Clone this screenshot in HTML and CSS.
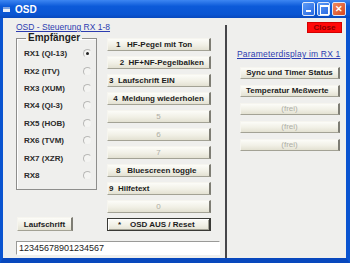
FILE: index.html
```html
<!DOCTYPE html>
<html lang="de">

<head>
    <meta charset="UTF-8">
    <title>OSD</title>
    <link rel="stylesheet" href="styles.css">
</head>

<body>
    <div class="window">
        <div class="titlebar">
            <span class="app-icon"></span>
            <span class="caption">OSD</span>
            <div class="controls">
                <span class="ctl ctl-min"></span>
                <span class="ctl ctl-max"></span>
                <span class="ctl ctl-close">&#10005;</span>
            </div>
        </div>

        <div class="client">
            <div class="main">
                <a class="link" href="#">OSD - Steuerung RX 1-8</a>

                <div class="row">
                    <div class="left-col">
                        <fieldset class="group">
                            <legend>Empfänger</legend>
                            <div class="radio-row"><span>RX1 (QI-13)</span><span class="radio checked"></span></div>
                            <div class="radio-row"><span>RX2 (ITV)</span><span class="radio"></span></div>
                            <div class="radio-row"><span>RX3 (XUM)</span><span class="radio"></span></div>
                            <div class="radio-row"><span>RX4 (QI-3)</span><span class="radio"></span></div>
                            <div class="radio-row"><span>RX5 (HOB)</span><span class="radio"></span></div>
                            <div class="radio-row"><span>RX6 (TVM)</span><span class="radio"></span></div>
                            <div class="radio-row"><span>RX7 (XZR)</span><span class="radio"></span></div>
                            <div class="radio-row"><span>RX8</span><span class="radio"></span></div>
                        </fieldset>
                        <button class="btn lauf">Laufschrift</button>
                    </div>

                    <div class="keys">
                        <button class="btn">1   HF-Pegel mit Ton    </button>
                        <button class="btn">   2  HF+NF-Pegelbalken</button>
                        <button class="btn left">3  Laufschrift EIN</button>
                        <button class="btn">4  Meldung wiederholen</button>
                        <button class="btn off">5</button>
                        <button class="btn off">6</button>
                        <button class="btn off">7</button>
                        <button class="btn">8   Bluescreen toggle  </button>
                        <button class="btn left">9  Hilfetext</button>
                        <button class="btn off">0</button>
                        <button class="btn default">*    OSD AUS / Reset  </button>
                    </div>
                </div>

                <input class="ticker" type="text" value="12345678901234567">
            </div>

            <div class="divider"></div>

            <div class="side">
                <div class="close-row"><button class="close-btn">Close</button></div>
                <a class="link" href="#">Parameterdisplay im RX 1</a>
                <div class="side-keys">
                    <button class="btn">Sync und Timer Status</button>
                    <button class="btn">Temperatur Meßwerte  </button>
                    <button class="btn off">(frei)</button>
                    <button class="btn off">(frei)</button>
                    <button class="btn off">(frei)</button>
                </div>
            </div>
        </div>
    </div>
</body>

</html>
```

FILE: styles.css
```css
* {
    box-sizing: border-box;
}

body {
    margin: 0;
    font-family: "Liberation Sans", Arial, sans-serif;
    background-color: #0a54d0;
}

.window {
    width: 350px;
    height: 263px;
    display: flex;
    flex-direction: column;
}

/* title bar */
.titlebar {
    height: 18px;
    display: flex;
    align-items: center;
    padding: 0 4px 0 3px;
    background: linear-gradient(#3d86f2, #0c5ad9 35%, #0a55d2 80%, #0848bd);
}

.app-icon {
    width: 7px;
    height: 5px;
    margin-right: 5px;
    background-color: #e8eef8;
    border-top: 2px solid #7fa4e0;
}

.caption {
    color: #fff;
    font-size: 10px;
    font-weight: bold;
}

.controls {
    margin-left: auto;
    display: flex;
    gap: 2px;
}

.ctl {
    width: 13px;
    height: 14px;
    border: 1px solid #dfe8f8;
    border-radius: 2px;
    background: linear-gradient(135deg, #5d9cf8, #2767e0);
    display: flex;
    align-items: center;
    justify-content: center;
    position: relative;
}

.ctl-min::after {
    content: "";
    position: absolute;
    left: 3px;
    bottom: 3px;
    width: 5px;
    height: 2px;
    background-color: #fff;
}

.ctl-max::after {
    content: "";
    position: absolute;
    left: 2px;
    top: 2px;
    width: 7px;
    height: 7px;
    border: 1px solid #fff;
    border-top-width: 2px;
}

.ctl-close {
    width: 14px;
    background: linear-gradient(135deg, #ee8a62, #d9461e);
    color: #fff;
    font-size: 9px;
    font-weight: bold;
}

/* client area */
.client {
    flex: 1;
    display: flex;
    background-color: #efefed;
    border-left: 3px solid #0a54d0;
    border-right: 4px solid #0a54d0;
    border-bottom: 5px solid #0848bd;
}

.main {
    width: 222px;
    padding: 4px 0 0 13px;
    display: flex;
    flex-direction: column;
}

.link {
    font-size: 8.5px;
    line-height: 11px;
    white-space: nowrap;
    color: #2c3cb0;
    text-decoration: underline;
}

.row {
    display: flex;
}

.left-col {
    width: 81px;
    display: flex;
    flex-direction: column;
}

.group {
    margin: 0;
    padding: 2px 3px 5px 7px;
    border: 1px solid #8e8e8c;
    box-shadow: inset 1px 1px 0 #fff;
}

.group legend {
    padding: 0 2px;
    margin-left: 2px;
    font-size: 10px;
    line-height: 10px;
    font-weight: bold;
    color: #1e1e1e;
}

.radio-row {
    height: 17.4px;
    display: flex;
    align-items: center;
    justify-content: space-between;
    font-size: 8px;
    font-weight: bold;
    color: #2a2a2a;
}

.radio {
    width: 9px;
    height: 9px;
    margin-right: 1px;
    border-radius: 50%;
    border: 1px solid;
    border-color: #b8b8b6 #eeeeec #eeeeec #b8b8b6;
    background-color: #f4f4f2;
    display: flex;
    align-items: center;
    justify-content: center;
}

.radio.checked::after {
    content: "";
    width: 3px;
    height: 3px;
    border-radius: 50%;
    background-color: #222;
}

.btn {
    display: block;
    width: 100%;
    height: 13px;
    padding: 0;
    font-family: "Liberation Sans", Arial, sans-serif;
    font-size: 8px;
    font-weight: bold;
    line-height: 11px;
    white-space: pre;
    text-align: center;
    color: #1c1c1c;
    background: linear-gradient(#fcfcf8, #f1f0e6 55%, #e3e1d2);
    border: 1px solid #f6f5ef;
    border-right: 2px solid #7e7d74;
    border-bottom: 1px solid #a3a295;
}

.btn.left {
    text-align: left;
    padding-left: 1px;
}

.btn.off {
    color: #aeada4;
    font-weight: normal;
}

.btn.default {
    border: 1px solid #3a3a36;
    border-right: 2px solid #3a3a36;
    box-shadow: inset 1px 1px 0 #fff, inset -1px -1px 0 #a3a295;
}

.lauf {
    width: 56px;
    height: 14px;
    margin: auto 0 0 1px;
}

.keys {
    width: 104px;
    margin-left: 10px;
    padding-top: 5px;
    display: flex;
    flex-direction: column;
    gap: 5px;
}

.ticker {
    width: 204px;
    height: 14px;
    margin-top: 10px;
    padding: 0 0 0 2px;
    font-family: "Liberation Sans", Arial, sans-serif;
    font-size: 9px;
    color: #222;
    background-color: #fff;
    border: 1px solid #fff;
    border-top-color: #9a9a98;
    border-left-color: #9a9a98;
    outline: none;
}

.divider {
    width: 2px;
    margin-top: 7px;
    background-color: #46464a;
}

.side {
    flex: 1;
    display: flex;
    flex-direction: column;
    padding: 4px 4px 0 10px;
}

.close-row {
    display: flex;
    justify-content: flex-end;
}

.close-btn {
    width: 35px;
    height: 11px;
    padding: 0;
    font-family: "Liberation Sans", Arial, sans-serif;
    font-size: 8px;
    font-weight: bold;
    line-height: 9px;
    color: #8a0000;
    background-color: #ff0a0a;
    border: 1px solid #d40000;
}

.side .link {
    margin-top: 16px;
    letter-spacing: 0.2px;
}

.side-keys {
    width: 100px;
    margin: 7px 0 0 3px;
    display: flex;
    flex-direction: column;
    gap: 6px;
}

.side-keys .btn {
    height: 12px;
    line-height: 10px;
}
```
